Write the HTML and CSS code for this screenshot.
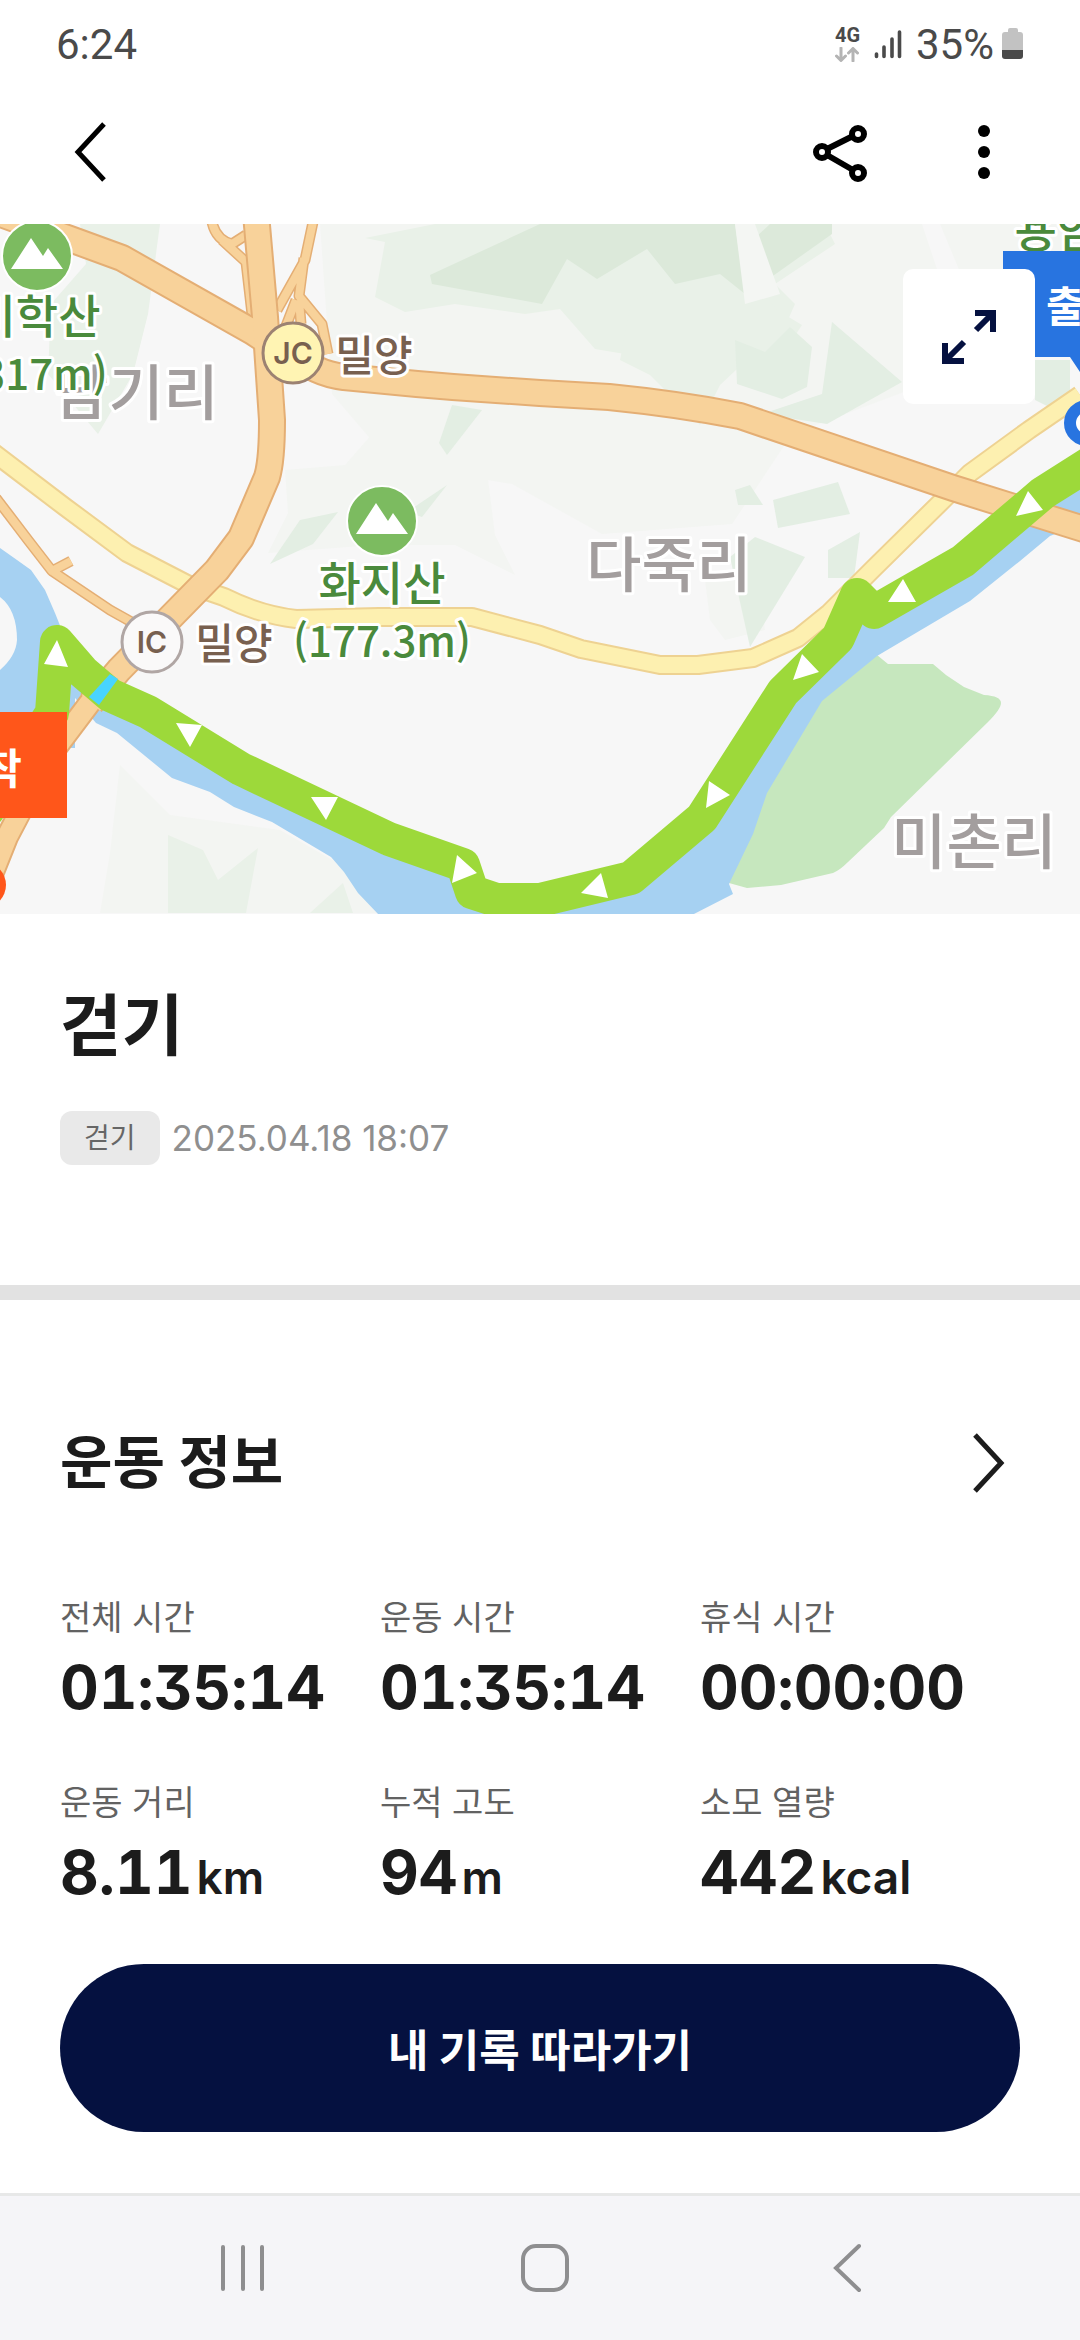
FILE: index.html
```html
<!DOCTYPE html>
<html lang="ko">
<head>
<meta charset="utf-8">
<meta name="viewport" content="width=device-width, initial-scale=1">
<title>걷기</title>
<link rel="stylesheet" href="styles.css">
</head>
<body>
<div class="screen">
  <div class="status">
    <span class="status-time">6:24</span>
    <div class="status-right">
      <div class="network">
        <span class="network-type">4G</span>
        <svg width="24" height="15" viewBox="0 0 24 15" fill="none" stroke="#b4b4b4" stroke-width="3" stroke-linecap="round" stroke-linejoin="round"><path d="M6 1v12M1.500 9 6 13.500 10.500 9M18 14V2M13.500 6 18 1.500 22.500 6"/></svg>
      </div>
      <svg class="signal" width="28" height="32" viewBox="0 0 28 32" stroke="#4a4a4a" stroke-width="3.600" stroke-linecap="round"><path d="M2.500 26v2.500M10 19v9.500M18 11v17.500M25.500 4v24.500"/></svg>
      <span class="status-level">35%</span>
      <svg class="battery" width="22" height="32" viewBox="0 0 22 32"><path fill="#c2c2c2" d="M6 2q0-2 2-2h6q2 0 2 2v2h2q3 0 3 3v16H0V7q0-3 3-3h3z"/><path fill="#4a4a4a" d="M0 22h21v6q0 3-3 3H3q-3 0-3-3z"/></svg>
    </div>
  </div>

  <header class="appbar">
    <button class="icon-button" type="button" aria-label="뒤로">
      <svg width="72" height="72" viewBox="0 0 72 72" fill="none" stroke="#000" stroke-width="5"><path d="M48 8 22 36l26 28"/></svg>
    </button>
    <div class="appbar-actions">
      <button class="icon-button" type="button" aria-label="공유">
        <svg width="72" height="72" viewBox="0 0 72 72" fill="none" stroke="#000" stroke-width="6"><circle cx="18" cy="36" r="6"/><circle cx="54" cy="18" r="6"/><circle cx="54" cy="57" r="6"/><path d="m23 33 26-13M23 39l26 15"/></svg>
      </button>
      <button class="icon-button" type="button" aria-label="더보기">
        <svg width="72" height="72" viewBox="0 0 72 72"><circle cx="36" cy="15" r="6"/><circle cx="36" cy="36" r="6"/><circle cx="36" cy="57" r="6"/></svg>
      </button>
    </div>
  </header>

  <main>
    <div class="map">
      <svg class="map-canvas" viewBox="0 224 1080 690" role="img" aria-label="운동 경로 지도">
        <rect y="224" width="1080" height="690" fill="#f7f7f7"/>
        <!-- hills -->
        <g fill="#f3f5f2">
          <path d="M322 224h600l30 90 0 60-160 60-60 90-130 10-90-50-120-20-60-70-12-170z"/>
          <path d="M285 470l60-5 70-80 70 70 10 80 20 40-60-30-80 0-107 8 20-40z"/>
          <path d="M120 765l50 50 110 15 70 40 28 43H100l10-60z"/>
          <path d="M940 224h140v120h-90z"/>
          <path d="M705 580l50-20 10 70-40 10-15-20z"/>
        </g>
        <g fill="#e9f1e8">
          <path d="M80 224h80l-12 90-15 60-35 60-50-60 3-70 35-40z"/>
          <path d="M365 238l70-14h390l10 20-60 40 20 20-20 45-60 0-20-50-40 60-60-10-35-40-35 5-70-10-50 8-30-15 10-55z"/>
          <path d="M632 300l60-20 60 0 25 30 25 15-20 30-30 0-32 30-20 40-50-50-30-15z"/>
        </g>
        <g fill="#dce9da">
          <path d="M430 275l110-51h195l10 70-25-20-45 10-28-35-50 30-30-20-25 45-110-20z"/>
          <path d="M770 224h62v10l-62 44-15-40z"/>
        </g>
        <path fill="#f4f6f3" d="M735 224h20l25 70-35 10z"/>
        <g fill="#e3eee3">
          <path d="M735 340l30 12 25-25 22 20-5 40-25 12-45-15z"/>
          <path d="M832 322l70 60-75 42-65-10 60-20z"/>
          <path d="M452 405l30 5-35 45-8-12z"/>
          <path d="M773 500l65-18 12 32-72 14z"/>
          <path d="M300 520l38-8-25 32-43 20z"/>
          <path d="M447 485l-25 32-15-5z"/>
          <path d="M735 490l15-5 13 20-25 0z"/>
          <path d="M755 537l50 20-55 90-20-90z"/>
          <path d="M828 550l32-18-6 46-26 0z"/>
          <path d="M1035 360h35v40l-15 10-20-10z"/>
        </g>
        <g fill="#e9f1e8">
          <path d="M168 835l35 15 15 30 40-32-12 65h-78z"/>
          <path d="M343 883l10 30h-43z"/>
        </g>
        <!-- park -->
        <path fill="#c6e7be" d="M877 655l11 9h45l13 11 18 12 20 8q17 1 17 8 0 6-13 19L891 817l-7 11-36 34q-8 8-15 11l-52 12-34 3-18-5-10-60 20-60 70-80z"/>
        <!-- river -->
        <path fill="#a6d1f2" d="M0 548l17 12 14 10 14 20 10 23 20 50 0 85H0v-78q16-14 17-30 0-30-17-43z"/>
        <path fill="#a6d1f2" d="M60 680l36 43 21 10 55 45 38 14 24 15 38 15 59 35 13 15 14 21 21 22h313l41-21-4-10 24-50 14-41 55-92 55-45 93-55 50-40 30-25 30-12v-50L860 610 700 800 600 890H500L100 680z"/>
        <!-- roads: casing first, then fill -->
        <g fill="none" stroke-linejoin="round">
          <path stroke="#eed292" stroke-width="20" d="M-6 453l71 54 62 46 62 32 35 12q36 18 72 22l83-2h93l68 18 41 14 79 16h38l55-7 45-20 31-25 45-45 72-71 24-24 59-43 51-35"/>
          <path stroke="#fdf0b0" stroke-width="16" d="M-6 453l71 54 62 46 62 32 35 12q36 18 72 22l83-2h93l68 18 41 14 79 16h38l55-7 45-20 31-25 45-45 72-71 24-24 59-43 51-35"/>
          <g stroke="#e4ae74" stroke-width="11">
            <path d="M-4 498l32 42 24 31 19-10M52 571l58 39 25 14"/>
            <path d="M212 222q4 18 20 22l14-9M222 240l24 22 6 52M313 222l-8 38-28 50M304 258l-5 38 23 28 6 30M296 300l-10 26M299 300l2 24"/>
          </g>
          <g stroke="#f8d29a" stroke-width="8">
            <path d="M-4 498l32 42 24 31 19-10M52 571l58 39 25 14"/>
            <path d="M212 222q4 18 20 22l14-9M222 240l24 22 6 52M313 222l-8 38-28 50M304 258l-5 38 23 28 6 30M296 300l-10 26M299 300l2 24"/>
          </g>
          <path stroke="#e4ae74" stroke-width="24" d="M92 700l-43 57-42 80-20 50"/>
          <g stroke="#e4ae74" stroke-width="28">
            <path d="M-10 210l80 29 52 19 131 74 15 10"/>
            <path d="M256 214l9 103 7 103q0 40-5 57l-26 61-24 32-98 100-28 33"/>
            <path d="M293 353q20 20 51 24l73 7 36 3 87 6 69 4q70 7 131 19l213 72 140 44"/>
          </g>
          <g stroke="#f8d29a" stroke-width="24">
            <path d="M-10 210l80 29 52 19 131 74 15 10"/>
            <path d="M256 214l9 103 7 103q0 40-5 57l-26 61-24 32-98 100-28 33"/>
            <path d="M293 353q20 20 51 24l73 7 36 3 87 6 69 4q70 7 131 19l213 72 140 44"/>
          </g>
          <path stroke="#f8d29a" stroke-width="20" d="M92 700l-43 57-42 80-20 50"/>
        </g>
        <!-- walked route -->
        <path fill="none" stroke="#9dd93a" stroke-width="34" stroke-linecap="round" stroke-linejoin="round" d="M1100 457l-57 36-80 68-89 51-17-17-19 43-55 54-81 126-71 60-91 22h-44l-24-8-9-27-74-26-148-70-93-57-38-17-27-23-26-30-5 71-64 97"/>
        <path fill="#48d4ff" d="M89 697l21-23 8 5-19 26z"/>
        <path fill="#fff" d="M57 640l-13 24 24 3zM176 723l26 2-12 22zM311 797h27l-12 23zM457 855l20 18-25 10zM601 873l-20 20 27 5zM709 781l21 14-24 13zM802 654l17 18-26 8zM903 579l-15 23h28zM1028 491l15 19-27 6z"/>
        <!-- place labels -->
        <g class="village">
          <text x="136" y="415">담기리</text>
          <text x="669" y="587">다죽리</text>
          <text x="974" y="864">미촌리</text>
        </g>
        <g class="peak">
          <text x="37" y="333">비학산</text>
          <text class="height" x="37" y="390">(317m)</text>
          <text x="382" y="600">화지산</text>
          <text class="height" x="382" y="657">(177.3m)</text>
          <text x="1078" y="247">용암산</text>
        </g>
        <g stroke="#fff" stroke-width="2" fill="#7cbb60"><circle cx="37" cy="256" r="35"/><circle cx="382" cy="521" r="35"/></g>
        <path fill="#fff" d="M11 269l20-31 12 18 5-8 15 21zM356 534l20-31 12 18 5-8 15 21z"/>
        <g class="junction">
          <circle cx="293" cy="353" r="30" fill="#fff4b3" stroke="#9c8272" stroke-width="3"/>
          <text class="badge" x="293" y="364">JC</text>
          <circle cx="152" cy="642" r="30" fill="#faf9f9" stroke="#b0a6a4" stroke-width="3"/>
          <text class="badge" x="152" y="653">IC</text>
          <text x="374" y="371">밀양</text>
          <text x="234" y="659">밀양</text>
        </g>
        <!-- start and finish -->
        <path fill="#2874e0" d="M1003 251h77v121l-10-15h-67z"/>
        <circle cx="1087" cy="423" r="17" fill="#fff" stroke="#2874e0" stroke-width="12"/>
        <text class="flag" x="1046" y="322">출발</text>
        <path fill="#ff561a" d="M0 712h67v106H0z"/>
        <circle cx="-17" cy="885" r="23" fill="#ff561a"/>
        <text class="flag flag-end" x="22" y="784">도착</text>
      </svg>
      <button class="expand" type="button" aria-label="지도 확대">
        <svg width="56" height="56" viewBox="0 0 56 56" fill="none" stroke="#051140" stroke-width="6"><path d="M34 4h18v19M35 21 51 5M4 34v18h19M5 51l18-18"/></svg>
      </button>
    </div>

    <section class="summary">
      <h1>걷기</h1>
      <div class="meta">
        <span class="chip">걷기</span>
        <time datetime="2025-04-18T18:07">2025.04.18 18:07</time>
      </div>
    </section>

    <section class="info">
      <div class="info-head">
        <h2>운동 정보</h2>
        <button class="icon-button" type="button" aria-label="운동 정보 더보기">
          <svg width="72" height="72" viewBox="0 0 72 72" fill="none" stroke="#1c1c1c" stroke-width="5"><path d="m27 8 26 28-26 28"/></svg>
        </button>
      </div>
      <dl class="stats">
        <div><dt>전체 시간</dt><dd>01:35:14</dd></div>
        <div><dt>운동 시간</dt><dd>01:35:14</dd></div>
        <div><dt>휴식 시간</dt><dd>00:00:00</dd></div>
        <div><dt>운동 거리</dt><dd>8.11<span class="unit">km</span></dd></div>
        <div><dt>누적 고도</dt><dd>94<span class="unit">m</span></dd></div>
        <div><dt>소모 열량</dt><dd>442<span class="unit">kcal</span></dd></div>
      </dl>
      <button class="follow" type="button">내 기록 따라가기</button>
    </section>
  </main>

  <nav class="navbar" aria-label="시스템 탐색">
    <button class="icon-button" type="button" aria-label="최근 앱">
      <svg width="72" height="72" viewBox="0 0 72 72" fill="none" stroke="#8e8e90" stroke-width="4" stroke-linecap="round"><path d="M16 15v42M36 15v42M55 15v42"/></svg>
    </button>
    <button class="icon-button" type="button" aria-label="홈">
      <svg width="72" height="72" viewBox="0 0 72 72" fill="none" stroke="#8e8e90" stroke-width="4"><rect x="14" y="14" width="44" height="44" rx="13"/></svg>
    </button>
    <button class="icon-button" type="button" aria-label="뒤로">
      <svg width="72" height="72" viewBox="0 0 72 72" fill="none" stroke="#8e8e90" stroke-width="4" stroke-linecap="round"><path d="M47 14 24 36l23 22"/></svg>
    </button>
  </nav>
</div>
</body>
</html>
```
FILE: styles.css
```css
* { box-sizing: border-box; }

body {
  margin: 0;
  background: #fff;
  color: #1c1c1c;
  font-family: Inter, "Noto Sans CJK KR", sans-serif;
}

h1, h2, dl, dd { margin: 0; }

button {
  padding: 0;
  border: 0;
  background: none;
  color: inherit;
  font: inherit;
  cursor: pointer;
}

svg { display: block; }

.screen {
  display: flex;
  flex-direction: column;
  min-height: 100vh;
}

.icon-button {
  width: 72px;
  height: 72px;
}

/* status bar */
.status {
  display: flex;
  align-items: center;
  justify-content: space-between;
  height: 88px;
  padding: 0 56px;
  color: #4a4a4a;
  font-family: Roboto, sans-serif;
  font-size: 42px;
}

.status-right {
  display: flex;
  align-items: center;
}

.network {
  display: flex;
  flex-direction: column;
  gap: 4px;
  margin-right: 14px;
}

.network-type {
  font-size: 20px;
  font-weight: 700;
  line-height: 16px;
}

.signal { margin-right: 14px; }

.battery { margin-left: 8px; }

/* app bar */
.appbar {
  display: flex;
  align-items: center;
  justify-content: space-between;
  height: 136px;
  padding: 0 60px 8px 56px;
}

.appbar-actions {
  display: flex;
  gap: 72px;
}

/* map */
.map { position: relative; }

.map-canvas {
  width: 100%;
  height: auto;
}

.map-canvas text {
  font-family: "Noto Sans CJK KR", sans-serif;
  font-weight: 500;
  text-anchor: middle;
  paint-order: stroke;
  stroke: #fff;
  stroke-width: 6px;
  stroke-linejoin: round;
}

.village text { font-size: 60px; fill: #a39e9e; }
.peak text { font-size: 46px; fill: #4a8a3c; }
.peak .height { font-size: 42px; }
.junction text { font-size: 42px; fill: #78604f; }

.map-canvas .badge {
  font-family: Inter, sans-serif;
  font-size: 30px;
  font-weight: 600;
  stroke: none;
}

.map-canvas .flag {
  font-size: 42px;
  font-weight: 700;
  fill: #fff;
  stroke: none;
  text-anchor: start;
}

.map-canvas .flag-end { text-anchor: end; }

.expand {
  position: absolute;
  top: 45px;
  right: 45px;
  display: grid;
  place-items: center;
  width: 132px;
  height: 135px;
  border-radius: 10px;
  background: #fff;
}

/* summary */
.summary {
  padding: 72px 60px 120px;
  border-bottom: 15px solid #e2e2e2;
}

h1 {
  font-size: 67px;
  font-weight: 700;
  line-height: 80px;
}

.meta {
  display: flex;
  align-items: center;
  gap: 12px;
  margin-top: 45px;
  color: #8f8f8f;
  font-size: 35px;
  line-height: 54px;
}

.chip {
  padding: 0 24px;
  border-radius: 12px;
  background: #e9e9e9;
  color: #666;
  font-size: 28px;
}

/* exercise info */
.info { padding: 127px 60px 60px; }

.info-head {
  display: flex;
  align-items: center;
  justify-content: space-between;
}

h2 {
  font-size: 57px;
  font-weight: 700;
  line-height: 72px;
}

.stats {
  display: grid;
  grid-template-columns: repeat(3, 1fr);
  row-gap: 62px;
  margin-top: 97px;
}

dt {
  color: #626262;
  font-size: 34px;
  line-height: 44px;
}

dd {
  height: 64px;
  margin-top: 15px;
  font-size: 60px;
  font-weight: 700;
  font-feature-settings: "tnum", "cv09", "calt" 0;
  line-height: 64px;
  white-space: nowrap;
}

.unit {
  margin-left: 4px;
  font-size: 46px;
  font-weight: 600;
  line-height: 1;
}

.follow {
  width: 100%;
  height: 168px;
  margin-top: 60px;
  border-radius: 84px;
  background: #051140;
  color: #fff;
  font-size: 44px;
  font-weight: 700;
}

/* system navigation */
.navbar {
  display: flex;
  align-items: center;
  justify-content: space-around;
  height: 147px;
  margin-top: auto;
  padding: 0 81px 0 92px;
  border-top: 3px solid #e7e8e8;
  background: #f5f5f8;
}
```
